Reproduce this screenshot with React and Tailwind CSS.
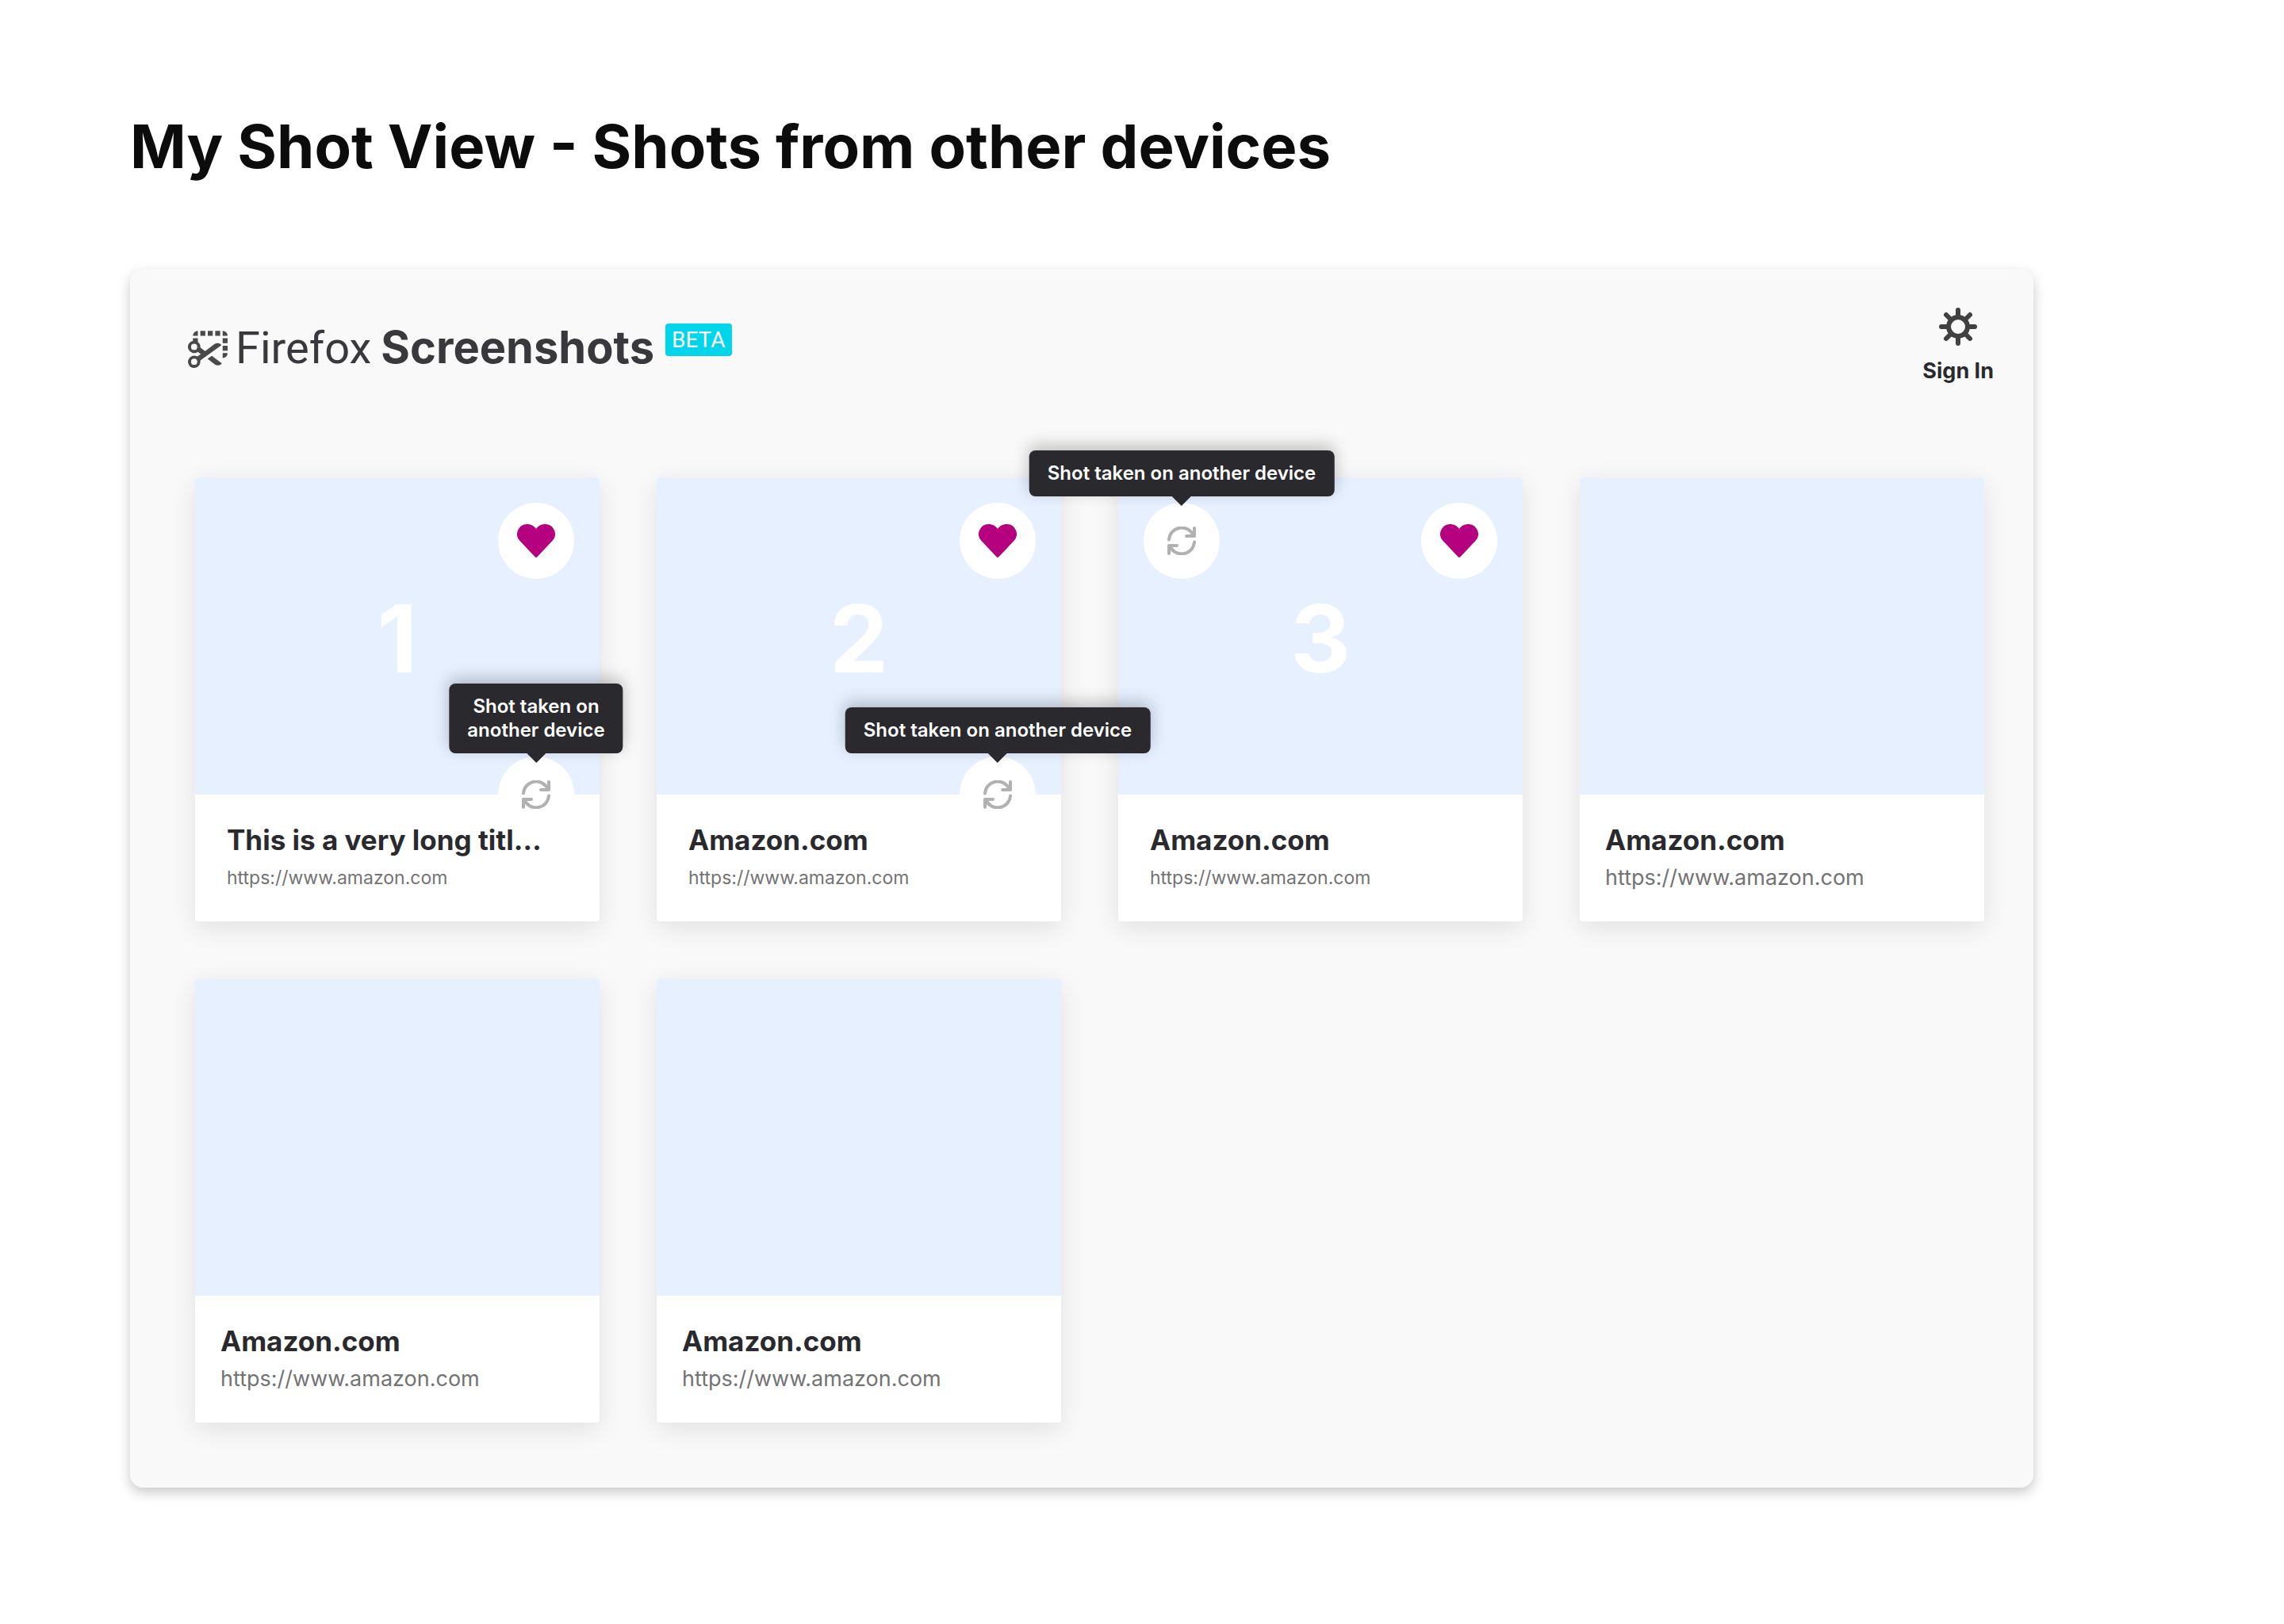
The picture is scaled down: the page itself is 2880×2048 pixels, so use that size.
import React from "react";

const URL_TEXT = "https://www.amazon.com";

const shots = [
  { title: "This is a very long titl…", number: "1", favorite: true, sync: "bottom", wrapTip: true, compact: true },
  { title: "Amazon.com", number: "2", favorite: true, sync: "bottom", compact: true },
  { title: "Amazon.com", number: "3", favorite: true, sync: "top", compact: true },
  { title: "Amazon.com" },
  { title: "Amazon.com" },
  { title: "Amazon.com" },
];

function ScissorsIcon() {
  return (
    <svg viewBox="0 0 32 32" className="h-[50px] w-[50px] shrink-0" fill="#4a4a4b" aria-hidden="true">
      <path d="M8 2a4 4 0 0 0-4 4h4V2zm12 0h-4v4h4V2zm8 0v4h4a4 4 0 0 0-4-4zM14 2h-4v4h4V2zm12 0h-4v4h4V2zm2 10h4V8h-4v4zm0 12a4 4 0 0 0 4-4h-4v4zm0-6h4v-4h-4v4zm-.882-4.334a4 4 0 0 0-5.57-.984l-7.67 5.662-3.936-2.76c.031-.193.05-.388.058-.584a4.976 4.976 0 0 0-2-3.978V8H4v2.1a5 5 0 1 0 3.916 8.948l2.484 1.738-2.8 1.964a4.988 4.988 0 1 0 2.3 3.266l17.218-12.35zM5 17.5a2.5 2.5 0 1 1 0-5 2.5 2.5 0 0 1 0 5zm0 12a2.5 2.5 0 1 1 0-5 2.5 2.5 0 0 1 0 5zm10.8-4.858l6.034 4.6a4 4 0 0 0 5.57-.984L19.28 22.2l-3.48 2.442z" />
    </svg>
  );
}

function GearIcon() {
  return (
    <svg viewBox="0 0 48 48" className="h-12 w-12" fill="none" stroke="#414142" strokeWidth="6" aria-hidden="true">
      <circle cx="24" cy="24" r="12" />
      <path
        strokeLinecap="round"
        d="M24 11V3M24 37v8M11 24H3M37 24h8M14.5 14.5 9 9M33.5 14.5 39 9M14.5 33.5 9 39M33.5 33.5 39 39"
      />
    </svg>
  );
}

function HeartIcon() {
  return (
    <svg viewBox="0 0 48 42" className="h-[42px] w-12" fill="#b5007f" aria-hidden="true">
      <path d="M24 6C21.5 2 17 0 12.5 0A12.5 12.5 0 0 0 3.7 21.3L22.6 41.2Q24 42.6 25.4 41.2L44.3 21.3A12.5 12.5 0 0 0 35.5 0C31 0 26.5 2 24 6Z" />
    </svg>
  );
}

function SyncIcon() {
  return (
    <svg
      viewBox="0 0 36 36"
      className="h-9 w-9"
      fill="none"
      stroke="#b1b1b1"
      strokeWidth="4"
      strokeLinecap="round"
      strokeLinejoin="round"
      aria-hidden="true"
    >
      <path d="M2 16.5A16 16 0 0 1 33 12M34 2v10H24" />
      <path d="M34 19.5A16 16 0 0 1 3 24M2 34V24h10" />
    </svg>
  );
}

function SyncBadge({ position, wrapTip }) {
  const onTop = position === "top";
  return (
    <div
      className={`absolute flex h-24 w-24 items-center justify-center rounded-full bg-white ${
        onTop ? "top-8 left-8" : "right-8 -bottom-12"
      }`}
    >
      <SyncIcon />
      <div
        role="tooltip"
        className={`absolute left-1/2 z-10 -translate-x-1/2 rounded-lg bg-[#2a2a2e] px-[23px] py-[14px] text-center text-[24px] leading-[30px] font-semibold whitespace-nowrap text-white shadow-[0_-6px_20px_rgba(12,12,13,0.25)] ${
          onTop ? "bottom-[104px]" : "bottom-[100px]"
        }`}
      >
        Shot taken on {wrapTip && <br />}
        another device
        <svg viewBox="0 0 24 12" className="absolute top-full left-1/2 h-3 w-6 -translate-x-1/2" fill="#2a2a2e" aria-hidden="true">
          <path d="M0 0h24L12 12z" />
        </svg>
      </div>
    </div>
  );
}

function ShotCard({ shot }) {
  return (
    <li className="rounded-[4px] bg-white shadow-[0_8px_32px_rgba(12,12,13,0.1)]">
      <div className="relative flex h-[400px] items-center justify-center rounded-t-[4px] bg-[#e6f0ff] pt-[6px]">
        {shot.number && <span className="text-[118px] leading-none font-bold text-white">{shot.number}</span>}
        {shot.favorite && (
          <button
            type="button"
            aria-label="Favorite"
            className="absolute top-8 right-8 flex h-24 w-24 items-center justify-center rounded-full bg-white"
          >
            <HeartIcon />
          </button>
        )}
        {shot.sync && <SyncBadge position={shot.sync} wrapTip={shot.wrapTip} />}
      </div>
      <div className={`pt-[33px] pb-[35px] ${shot.compact ? "px-10" : "px-8"}`}>
        <h2 className="truncate text-[35px] leading-[48px] font-bold text-[#2a2a2e]">{shot.title}</h2>
        <a
          href={URL_TEXT}
          className={`mt-1 block leading-[40px] text-[#737373] ${shot.compact ? "text-[23px]" : "text-[27px]"}`}
        >
          {URL_TEXT}
        </a>
      </div>
    </li>
  );
}

export default function App() {
  return (
    <div className="min-h-screen bg-white pt-[136px] pr-[316px] pb-[172px] pl-[164px] font-['Inter',sans-serif]">
      <h1 className="text-[76px] leading-[96px] font-bold text-[#0c0c0d]">My Shot View - Shots from other devices</h1>
      <main className="mt-[108px] rounded-2xl bg-[#f9f9f9] shadow-[0_6px_16px_rgba(0,0,0,0.22)]">
        <header className="flex items-start justify-between pt-12 pr-[50px] pb-[118px] pl-[73px]">
          <div className="mt-[18px] flex items-center text-[#38383d]">
            <ScissorsIcon />
            <p className="ml-[10px] flex items-baseline gap-3 text-[56px] leading-[64px]">
              <span className="font-['Roboto',sans-serif]">Firefox</span>
              <span className="font-bold">Screenshots</span>
            </p>
            <span className="mt-[2px] ml-[14px] self-start rounded-[4px] bg-[#00d5ec] px-2 font-['Roboto',sans-serif] text-[28px] leading-[41px] text-white">
              BETA
            </span>
          </div>
          <button type="button" className="flex flex-col items-center gap-4 text-[27px] leading-8 font-bold text-[#2a2a2e]">
            <GearIcon />
            Sign In
          </button>
        </header>
        <ul className="grid grid-cols-4 gap-[72px] pr-[62px] pb-[82px] pl-[82px]">
          {shots.map((shot, i) => (
            <ShotCard key={i} shot={shot} />
          ))}
        </ul>
      </main>
    </div>
  );
}
